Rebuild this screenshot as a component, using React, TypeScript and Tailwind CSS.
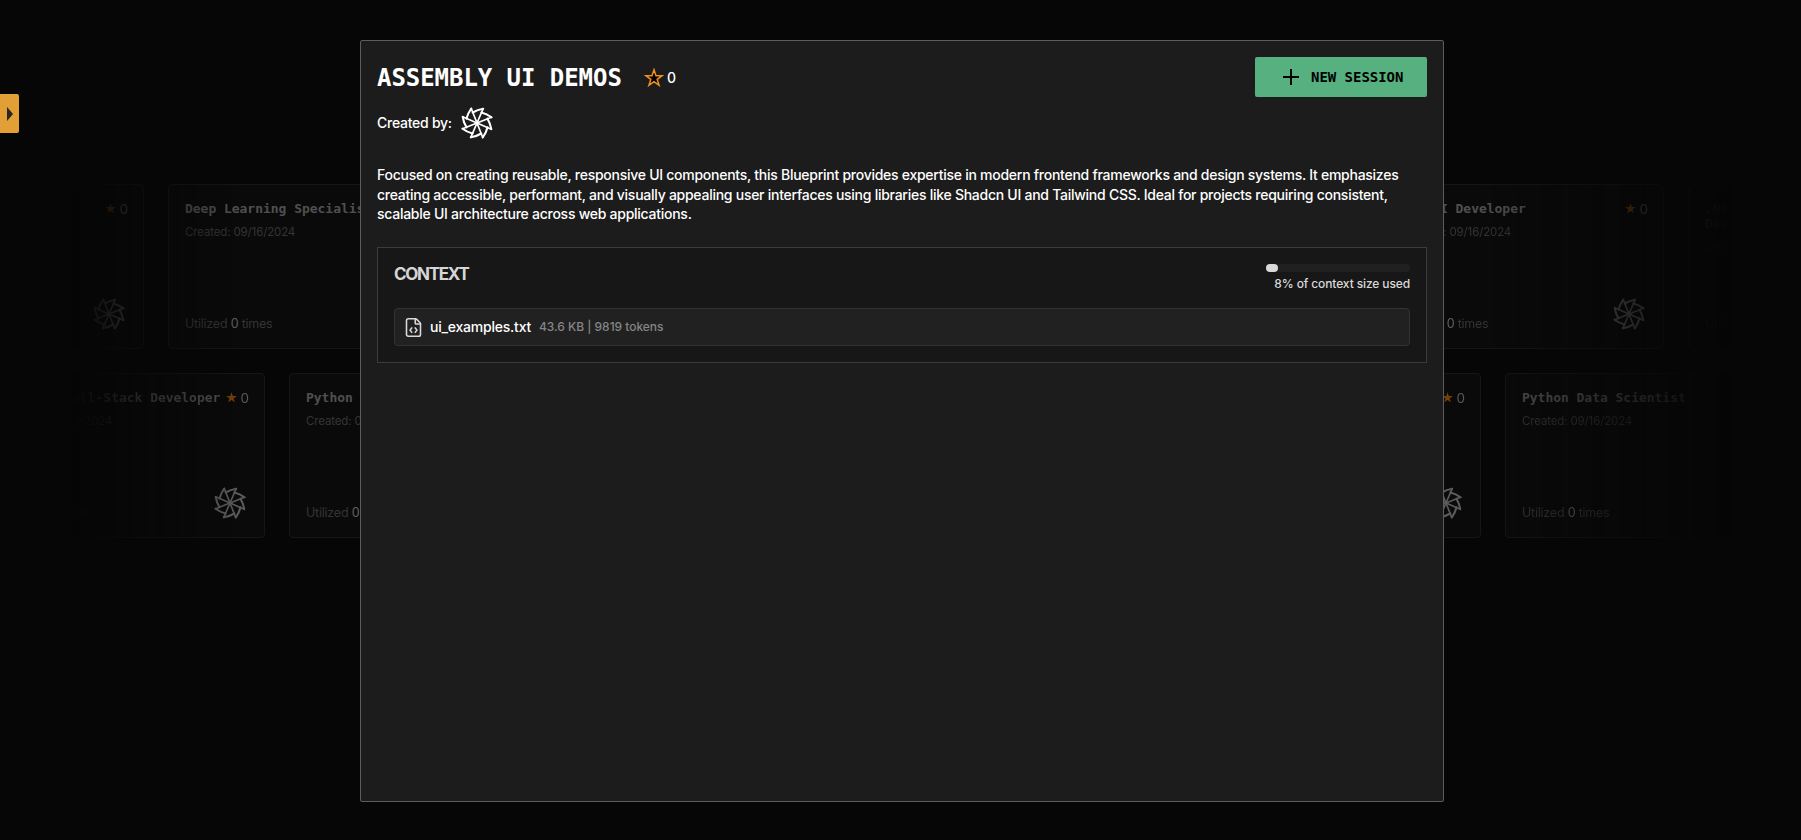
import React from "react";
import { FileCode } from "lucide-react";

type CardData = { id: number; title?: string; details?: boolean };

const rowOne: CardData[] = [
  { id: 1, details: false },
  { id: 2, title: "Deep Learning Specialist" },
  { id: 3, details: false },
  { id: 4, details: false },
  { id: 5, details: false },
  { id: 6, title: "Gen AI Developer" },
  { id: 7, title: ".NET Enterprise Application Developer" },
];

const rowTwo: CardData[] = [
  { id: 8, title: "Angular Full-Stack Developer" },
  { id: 9, title: "Python Developer" },
  { id: 10, details: false },
  { id: 11, details: false },
  { id: 12, details: false },
  { id: 13, title: "Python Data Scientist" },
];

const blades = [0, 45, 90, 135, 180, 225, 270, 315];

function Pinwheel({ className }: { className: string }) {
  return (
    <svg viewBox="-16 -16 32 32" className={className} fill="none" stroke="currentColor" strokeLinejoin="round" strokeLinecap="round">
      {blades.map((angle) => (
        <g key={angle} transform={`rotate(${angle})`}>
          <path d="M0 0L6.2 -14.3" strokeWidth="1.7" />
          <path d="M6.2 -14.3Q0.5 -13.4 -4.3 -10.5" strokeWidth="2.1" />
        </g>
      ))}
    </svg>
  );
}

function Star({ className }: { className: string }) {
  return (
    <svg viewBox="0 0 20 20" className={className} strokeWidth="1.5" strokeLinejoin="miter">
      <path d="M10 1.8L12 7.7H18.2L13.2 11.4L15.1 17.4L10 13.7L4.9 17.4L6.8 11.4L1.8 7.7H8Z" />
    </svg>
  );
}

function Card({ title, details = true }: CardData) {
  return (
    <article className="flex h-[165px] w-[280px] shrink-0 flex-col rounded border border-[#161616] bg-[#0a0a0a] pt-4 pr-[15px] pb-[18px] pl-4">
      <div className="flex items-start justify-between">
        <h3 className="font-['DejaVu_Sans_Mono'] text-[13px] leading-[15px] font-bold tracking-[-0.03px] text-[#505050]">{title}</h3>
        <div className="flex h-[15px] shrink-0 items-center gap-0.5 text-[#585858]">
          <Star className="size-[13px] fill-[#734108] stroke-none" />
          <span className="text-[13.5px] leading-[14px]">0</span>
        </div>
      </div>
      {details && <p className="mt-2 text-[11.5px] leading-4 tracking-[-0.14px] text-[#343434]">Created: 09/16/2024</p>}
      <div className="mt-auto flex h-8 items-end">
        {details && (
          <p className="mb-[-2px] text-[12.5px] leading-4 tracking-[-0.22px] text-[#343434]">
            Utilized <span className="text-[#606060]">0</span> times
          </p>
        )}
        <Pinwheel className="mr-[3px] ml-auto size-8 text-[#5b5b5b]" />
      </div>
    </article>
  );
}

export default function App() {
  return (
    <div className="relative h-[840px] w-full overflow-hidden bg-[#060606] font-['Inter',sans-serif]">
      <main className="flex h-full flex-col gap-6 pt-[184px] [mask-image:linear-gradient(to_right,transparent_72px,black_240px,black_1480px,transparent_1730px)]">
        <div className="-ml-[136px] flex gap-6">
          {rowOne.map((card) => (
            <Card key={card.id} {...card} />
          ))}
        </div>
        <div className="-ml-[15px] flex gap-6">
          {rowTwo.map((card) => (
            <Card key={card.id} {...card} />
          ))}
        </div>
      </main>

      <button aria-label="Open sidebar" className="absolute top-[94px] left-0 flex h-[39px] w-[19px] items-center justify-end rounded-r-[2px] bg-[#e29f36] pr-1.5">
        <svg viewBox="0 0 6 14" className="h-[14px] w-[6px] fill-[#262626]">
          <path d="M0 0L6 7L0 14Z" />
        </svg>
      </button>

      <section role="dialog" className="absolute top-10 left-[360px] h-[762px] w-[1084px] rounded-[2px] border border-[#5c5c5c] bg-[#1c1c1c] p-4 text-white">
        <header className="flex h-10 items-center">
          <h1 className="mt-0.5 w-[245px] font-['DejaVu_Sans_Mono'] text-[24px] leading-10 font-bold tracking-[-0.05px] whitespace-nowrap">ASSEMBLY UI DEMOS</h1>
          <Star className="mt-px ml-[22px] size-5 fill-black stroke-[#f0901e]" />
          <span className="mt-px ml-[3px] text-sm font-medium">0</span>
          <button className="ml-auto flex h-10 w-[172px] items-center rounded-[2px] bg-[#56b07f] pl-7 text-black">
            <svg viewBox="0 0 16 16" className="size-4 fill-none stroke-black stroke-2">
              <path d="M8 0V16M0 8H16" />
            </svg>
            <span className="ml-3 font-['DejaVu_Sans_Mono'] text-[14px] font-bold tracking-[-0.03px] whitespace-nowrap">NEW SESSION</span>
          </button>
        </header>

        <div className="mt-2.5 flex h-8 items-center gap-[9px] text-sm font-medium tracking-[-0.26px]">
          Created by:
          <Pinwheel className="size-8" />
        </div>

        <p className="mt-[26px] text-sm leading-[19.5px] font-medium tracking-[-0.262px] whitespace-nowrap">
          Focused on creating reusable, responsive UI components, this Blueprint provides expertise in modern frontend frameworks and design systems. It emphasizes
          <br />
          creating accessible, performant, and visually appealing user interfaces using libraries like Shadcn UI and Tailwind CSS. Ideal for projects requiring consistent,
          <br />
          scalable UI architecture across web applications.
        </p>

        <section className="mt-[23.5px] h-[116px] border border-[#3c3c3c] bg-[#171717] px-4 pt-4">
          <div className="flex h-[44px] justify-between">
            <h2 className="text-[17px] leading-5 font-bold tracking-[-1.3px] text-[#d6d6d6]">CONTEXT</h2>
            <div className="flex flex-col items-end">
              <div className="h-2 w-36 rounded-full bg-[#202020]">
                <div className="h-2 w-3 rounded-full bg-[#d9d9d9]" />
              </div>
              <p className="mt-1 text-xs leading-4 font-medium tracking-[-0.12px] text-[#d9d9d9]">8% of context size used</p>
            </div>
          </div>
          <div className="flex h-[38px] items-center rounded border border-[#333] bg-[#212121] pl-2">
            <FileCode className="size-[21px] text-[#d9d9d9]" strokeWidth={1.8} />
            <span className="ml-[6px] text-sm font-medium tracking-[-0.22px] text-white">ui_examples.txt</span>
            <span className="ml-2 text-xs font-medium tracking-[-0.03px] text-[#858585]">43.6 KB | 9819 tokens</span>
          </div>
        </section>
      </section>
    </div>
  );
}
